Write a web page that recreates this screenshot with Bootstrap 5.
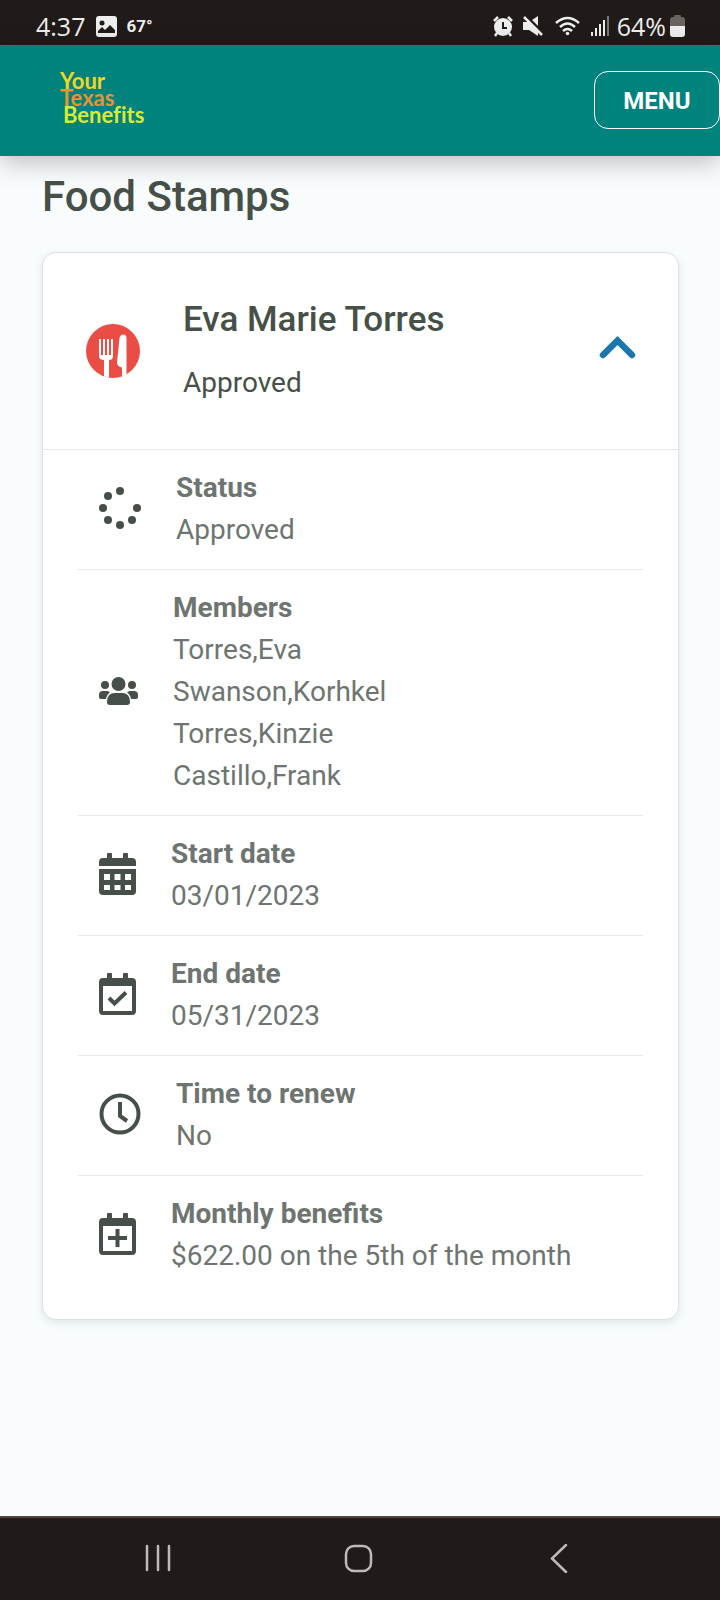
<!DOCTYPE html>
<html lang="en">
<head>
<meta charset="utf-8">
<meta name="viewport" content="width=device-width, initial-scale=1">
<title>Your Texas Benefits</title>
<link href="https://cdn.jsdelivr.net/npm/bootstrap@5.3.0/dist/css/bootstrap.min.css" rel="stylesheet">
<style>
  body { font-family: Roboto, sans-serif; font-size: 28px; line-height: 42px; color: #464f48; background: #f8fcfd; }
  svg { display: block; flex-shrink: 0; }
  .status-bar { height: 45px; padding: 7px 35px 0 36px; background: #201b18; color: #eee; font-family: "Open Sans", sans-serif; font-size: 25px; line-height: 38px; gap: 8px; }
  .temperature { font-family: Roboto, sans-serif; font-size: 17px; font-weight: 700; }
  .status-icons { gap: 10px; }
  .site-header { height: 111px; padding-left: 60px; background: #00837d; box-shadow: 0 6px 24px rgba(0, 0, 0, .25); z-index: 1; }
  .logo { font-family: Lato, sans-serif; font-size: 22px; font-weight: 700; font-variant-ligatures: none; line-height: 17px; padding-bottom: 6px; color: #f3d422; }
  .logo-texas { color: #e59433; }
  .logo-benefits { color: #dbea30; padding-left: 3px; }
  .menu-btn { width: 126px; height: 58px; margin-bottom: 2px; padding: 2px 0 0; border: 1px solid #fff; border-radius: 14px; color: #fff; font-size: 24px; font-weight: 700; }
  .menu-btn:hover { color: #fff; border-color: #fff; background: #00706b; }
  main { padding: 16px 41px 42px 42px; }
  h1 { font-size: 42px; line-height: 50px; font-weight: 500; margin-bottom: 30px; }
  .benefit { border: 1px solid #dbe2e5; border-radius: 14px; box-shadow: 0 3px 8px rgba(40, 80, 90, .12); color: inherit; }
  .benefit svg { margin-bottom: 2px; }
  .benefit-head { padding: 46px 42px 45px 43px; border-bottom: 1px solid #e5ebeb; gap: 43px; }
  h2 { font-size: 35px; line-height: 42px; font-weight: 500; margin-bottom: 21px; }
  .details { padding: 0 35px 24px; }
  .details li { display: flex; align-items: center; gap: 35px; padding: 17px 21px 18px; border-bottom: 1px solid #e5ebeb; color: #6e7571; }
  .details li:last-child { border-bottom: 0; }
  .details svg { color: #464f48; }
  h3 { font-size: 28px; line-height: 42px; font-weight: 700; margin: 0; }
  .nav-bar { height: 84px; padding: 0 3px 2px 0; border-top: 2px solid #50433f; background: #201b18; }
  .nav-bar button { width: 28%; color: #bdbab8; }
</style>
</head>
<body>
<div class="d-flex flex-column min-vh-100 overflow-hidden">
  <div class="status-bar d-flex align-items-center">
    <span>4:37</span>
    <svg width="25" height="21" viewBox="0 0 25 21" aria-hidden="true"><rect x="3" width="21" height="21" rx="3" fill="#eee"/><circle cx="9" cy="7" r="2.500" fill="#201b18"/><path d="M5 15l4-4 3 3 5-5 5 5v3H5z" fill="#201b18"/></svg>
    <span class="temperature">67°</span>
    <div class="status-icons d-flex align-items-center ms-auto">
      <svg width="20" height="21" viewBox="0 0 20 21" fill="#eee" aria-hidden="true"><circle cx="10" cy="11" r="9"/><path d="M1 5l4-4M19 5l-4-4M4 17l-2 3M16 17l2 3" stroke="#eee" stroke-width="2.500" fill="none"/><path d="M10 6v6h4" stroke="#201b18" stroke-width="2" fill="none"/></svg>
      <svg width="21" height="21" viewBox="0 0 21 21" fill="#eee" aria-hidden="true"><path d="M0 6h6l9-6v20l-9-6H0z"/><path d="M3 0l18 18" stroke="#201b18" stroke-width="3"/><path d="M1 1l18 18" stroke="#eee" stroke-width="2.500"/></svg>
      <svg width="27" height="20" viewBox="0 0 27 20" fill="none" stroke="#eee" stroke-width="2.500" aria-hidden="true"><path d="M2 7q11.500-10 23 0M6 11q7.500-7 15 0M9 15q4.500-4 9 0"/><circle cx="13.500" cy="17.500" r="1.800" fill="#eee" stroke="none"/></svg>
      <svg width="18" height="20" viewBox="0 0 18 20" fill="#eee" aria-hidden="true"><path d="M0 16h2v4H0zM4 12h2v8H4zM8 8h2v12H8zM12 4h2v16h-2z"/><path d="M16 0h2v20h-2z" fill="#777"/></svg>
    </div>
    <div class="d-flex align-items-center gap-1">
      <span>64%</span>
      <svg width="15" height="22" viewBox="0 0 15 22" aria-hidden="true"><path d="M5 0h5q1 0 1 2h1q3 0 3 3v6H0V5q0-3 3-3h1q0-2 1-2z" fill="#69645f"/><path d="M0 11h15v8q0 3-3 3H3q-3 0-3-3z" fill="#eee"/></svg>
    </div>
  </div>

  <header class="site-header d-flex align-items-center justify-content-between position-relative">
    <a href="#" class="logo text-decoration-none">
      <span class="d-block">Your</span>
      <span class="d-block logo-texas">Texas</span>
      <span class="d-block logo-benefits">Benefits</span>
    </a>
    <button type="button" class="btn menu-btn">MENU</button>
  </header>

  <main class="flex-grow-1">
    <h1>Food Stamps</h1>
    <section class="card benefit">
      <div class="benefit-head d-flex align-items-center">
        <svg width="54" height="54" viewBox="0 0 54 54" aria-hidden="true">
          <defs><clipPath id="plate"><circle cx="27" cy="27" r="27"/></clipPath></defs>
          <g clip-path="url(#plate)"><rect width="54" height="54" fill="#ea4d45"/>
          <path fill="#fff" d="M13 15h2v16h2V15h2v16h2V15h2v16h2V15h2v17q0 4-4 4v18h-5V36q-5 0-5-4zM33.500 14q.5-3.500 4-3.500 3 0 3 4v40h-4.500V43.500q-5-1-5-5z"/></g>
        </svg>
        <div class="flex-grow-1">
          <h2>Eva Marie Torres</h2>
          <p class="m-0">Approved</p>
        </div>
        <button type="button" class="btn p-0 border-0" aria-label="Collapse details" aria-expanded="true" data-bs-toggle="collapse" data-bs-target="#details">
          <svg width="38" height="32" viewBox="0 0 38 32" fill="none" stroke="#1c76ae" stroke-width="6.500" stroke-linecap="round"><path d="M5 20L19.500 5.500L34 20"/></svg>
        </button>
      </div>
      <div class="collapse show" id="details">
        <ul class="details list-unstyled m-0">
          <li>
            <svg width="42" height="42" viewBox="0 0 42 42" fill="currentColor" aria-hidden="true"><circle cx="21" cy="4" r="4"/><circle cx="9" cy="9" r="4"/><circle cx="4" cy="21" r="4"/><circle cx="9" cy="33" r="4"/><circle cx="21" cy="38" r="4"/><circle cx="33" cy="33" r="4"/><circle cx="38" cy="21" r="4"/></svg>
            <div><h3>Status</h3>Approved</div>
          </li>
          <li>
            <svg width="39" height="28" viewBox="0 0 39 28" fill="currentColor" aria-hidden="true"><circle cx="6" cy="8" r="4"/><circle cx="33" cy="8" r="4"/><circle cx="19.500" cy="7" r="7"/><path d="M8 25q0-9 8-9h7q8 0 8 9 0 3-3 3H11q-3 0-3-3zM0 20v-2q0-4 4-4h4q2 0 3 1.500Q7.500 18 7 22H2q-2 0-2-2zM39 20v-2q0-4-4-4h-4q-2 0-3 1.500Q31.500 18 32 22h5q2 0 2-2z"/></svg>
            <div><h3>Members</h3>Torres,Eva<br>Swanson,Korhkel<br>Torres,Kinzie<br>Castillo,Frank</div>
          </li>
          <li>
            <svg width="37" height="42" viewBox="0 0 37 42" fill="currentColor" aria-hidden="true"><path fill-rule="evenodd" d="M0 13V9q0-4 4-4h4V1q0-1 1-1h3q1 0 1 1v4h11V1q0-1 1-1h3q1 0 1 1v4h4q4 0 4 4v4zM0 16h37v22q0 4-4 4H4q-4 0-4-4zM5 21v6h6v-6zM15.500 21v6h6v-6zM26 21v6h6v-6zM5 32v5h6v-5zM15.500 32v5h6v-5zM26 32v5h6v-5z"/></svg>
            <div><h3>Start date</h3>03/01/2023</div>
          </li>
          <li>
            <svg width="37" height="42" viewBox="0 0 37 42" fill="currentColor" aria-hidden="true"><path fill-rule="evenodd" d="M4 5h4V1q0-1 1-1h3q1 0 1 1v4h11V1q0-1 1-1h3q1 0 1 1v4h4q4 0 4 4v29q0 4-4 4H4q-4 0-4-4V9q0-4 4-4zM4 13v25h29V13z"/><path d="M10 25l5.500 5.500L27 19.500" fill="none" stroke="currentColor" stroke-width="4"/></svg>
            <div><h3>End date</h3>05/31/2023</div>
          </li>
          <li>
            <svg width="42" height="42" viewBox="0 0 42 42" fill="none" stroke="currentColor" stroke-width="4" aria-hidden="true"><circle cx="21" cy="21" r="18.500"/><path d="M21 9v14l7 5"/></svg>
            <div><h3>Time to renew</h3>No</div>
          </li>
          <li>
            <svg width="37" height="42" viewBox="0 0 37 42" fill="currentColor" aria-hidden="true"><path fill-rule="evenodd" d="M4 5h4V1q0-1 1-1h3q1 0 1 1v4h11V1q0-1 1-1h3q1 0 1 1v4h4q4 0 4 4v29q0 4-4 4H4q-4 0-4-4V9q0-4 4-4zM4 13v25h29V13z"/><path d="M9 25h19M18.500 16v18" fill="none" stroke="currentColor" stroke-width="4"/></svg>
            <div><h3>Monthly benefits</h3>$622.00 on the 5th of the month</div>
          </li>
        </ul>
      </div>
    </section>
  </main>

  <nav class="nav-bar d-flex justify-content-center" aria-label="Device">
    <button type="button" class="btn d-flex align-items-center justify-content-center" aria-label="Recent apps"><svg width="26" height="28" viewBox="0 0 26 28" stroke="currentColor" stroke-width="2.500" stroke-linecap="round"><path d="M2 2v24M13 2v24M24 2v24"/></svg></button>
    <button type="button" class="btn d-flex align-items-center justify-content-center" aria-label="Home"><svg width="29" height="29" viewBox="0 0 29 29" fill="none" stroke="currentColor" stroke-width="2.500"><rect x="2" y="2" width="25" height="25" rx="8"/></svg></button>
    <button type="button" class="btn d-flex align-items-center justify-content-center" aria-label="Back"><svg width="18" height="29" viewBox="0 0 18 29" fill="none" stroke="currentColor" stroke-width="2.500" stroke-linecap="round"><path d="M16 1L2 14.500L16 28"/></svg></button>
  </nav>
</div>
<script src="https://cdn.jsdelivr.net/npm/bootstrap@5.3.0/dist/js/bootstrap.bundle.min.js"></script>
</body>
</html>
